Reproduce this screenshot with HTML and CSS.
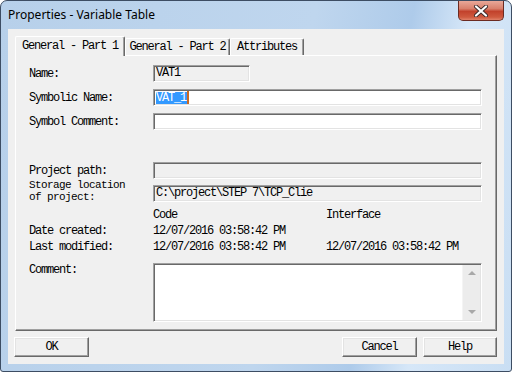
FILE: index.html
```html
<!DOCTYPE html>
<html lang="en">
<head>
    <meta charset="UTF-8">
    <title>Properties - Variable Table</title>
    <link rel="stylesheet" href="styles.css">
</head>
<body>
<div class="window">
    <div class="titlebar">
        <span class="title">Properties - Variable Table</span>
        <div class="close-btn">
            <svg width="16" height="12" viewBox="0 0 16 12">
                <path d="M3 1.5 L13 10.5 M13 1.5 L3 10.5" stroke="#3a2a2a" stroke-width="4" stroke-linecap="round"/>
                <path d="M3 1.5 L13 10.5 M13 1.5 L3 10.5" stroke="#ffffff" stroke-width="2.2" stroke-linecap="round"/>
            </svg>
        </div>
    </div>

    <div class="client">
        <div class="tabs">
            <div class="tab active">General - Part 1</div>
            <div class="tab tab-part2">General - Part 2</div>
            <div class="tab tab-attr">Attributes</div>
        </div>

        <div class="pane">
            <div class="row">
                <label>Name:</label>
                <div class="field readonly field-short">VAT1</div>
            </div>
            <div class="row gap-7">
                <label>Symbolic Name:</label>
                <div class="field"><span class="selected">VAT_1</span><span class="caret"></span></div>
            </div>
            <div class="row gap-7">
                <label>Symbol Comment:</label>
                <div class="field"></div>
            </div>
            <div class="row gap-32">
                <label>Project path:</label>
                <div class="field readonly"></div>
            </div>
            <div class="row row-top gap-6">
                <label class="label-two-lines">Storage location<br>of project:</label>
                <div class="field readonly">C:\project\STEP 7\TCP_Clie</div>
            </div>

            <div class="info-row info-head">
                <span></span>
                <span>Code</span>
                <span>Interface</span>
            </div>
            <div class="info-row">
                <span>Date created:</span>
                <span>12/07/2016 03:58:42 PM</span>
                <span></span>
            </div>
            <div class="info-row">
                <span>Last modified:</span>
                <span>12/07/2016 03:58:42 PM</span>
                <span>12/07/2016 03:58:42 PM</span>
            </div>

            <div class="row row-top comment-row">
                <label class="comment-label">Comment:</label>
                <div class="field memo">
                    <div class="memo-text"></div>
                    <div class="scrollbar">
                        <div class="arrow arrow-up"></div>
                        <div class="arrow arrow-down"></div>
                    </div>
                </div>
            </div>
        </div>

        <div class="buttons">
            <div class="btn">OK</div>
            <div class="btn-spacer"></div>
            <div class="btn">Cancel</div>
            <div class="btn">Help</div>
        </div>
    </div>
</div>
</body>
</html>
```

FILE: styles.css
```css
body {
    margin: 0;
    padding: 0;
    background-color: #ffffff;
}

.window {
    width: 512px;
    height: 372px;
    box-sizing: border-box;
    border: 1px solid #3d4d63;
    border-radius: 7px 7px 3px 3px;
    padding: 0 7px 7px 7px;
    background: linear-gradient(100deg, #b7d0ea 0%, #bfd6ee 55%, #aecbea 72%, #d6e7f8 82%, #c9def3 100%);
}

.titlebar {
    height: 28px;
    display: flex;
    align-items: flex-start;
}

.title {
    font-family: "Noto Sans", "Open Sans", sans-serif;
    font-size: 12px;
    line-height: 28px;
    color: #000;
}

.close-btn {
    margin-left: auto;
    width: 46px;
    height: 20px;
    box-sizing: border-box;
    border: 1px solid #6b2b22;
    border-top: none;
    border-radius: 0 0 5px 5px;
    background: linear-gradient(#e9a899 0%, #d9806c 40%, #c2422c 55%, #cf5a3f 85%, #e0826a 100%);
    display: flex;
    align-items: center;
    justify-content: center;
}

.client {
    height: 335px;
    box-sizing: border-box;
    background-color: #f0f0f0;
    padding: 7px 7px 7px 7px;
    font-family: "Liberation Mono", monospace;
    font-size: 12px;
    letter-spacing: -1.2px;
    color: #000;
}

/* tab strip */
.tabs {
    display: flex;
    align-items: flex-end;
    height: 19px;
}

.tab {
    height: 17px;
    box-sizing: border-box;
    border: 1px solid #ffffff;
    border-bottom: none;
    border-right-color: #696969;
    border-radius: 2px 2px 0 0;
    box-shadow: inset -1px 0 #a0a0a0;
    background-color: #f0f0f0;
    text-align: center;
    line-height: 14px;
    padding-top: 1px;
}

.tab.active {
    width: 110px;
    height: 20px;
    margin-bottom: -1px;
    padding-top: 2px;
    position: relative;
    z-index: 1;
}

.tab-part2 {
    width: 105px;
}

.tab-attr {
    width: 74px;
}

/* tab page */
.pane {
    height: 276px;
    box-sizing: border-box;
    border: 1px solid;
    border-color: #ffffff #696969 #696969 #ffffff;
    box-shadow: inset -1px -1px #a0a0a0;
    padding: 9px 14px 0 13px;
}

.row {
    display: grid;
    grid-template-columns: 124px 1fr;
    align-items: center;
}

.row-top {
    align-items: start;
}

.gap-6 {
    margin-top: 6px;
}

.gap-7 {
    margin-top: 7px;
}

.gap-32 {
    margin-top: 32px;
}

label {
    line-height: 12px;
}

.label-two-lines {
    margin-top: -6px;
    font-size: 11px;
    letter-spacing: -0.6px;
}

.field {
    height: 17px;
    box-sizing: border-box;
    border: 1px solid;
    border-color: #a0a0a0 #ffffff #ffffff #a0a0a0;
    box-shadow: inset 1px 1px #696969, inset -1px -1px #e3e3e3;
    background-color: #ffffff;
    padding: 0 2px;
    line-height: 15px;
    white-space: nowrap;
    overflow: hidden;
    display: flex;
    align-items: center;
}

.field.readonly {
    background-color: #f0f0f0;
}

.field-short {
    width: 97px;
}

.selected {
    background-color: #3399ff;
    color: #ffffff;
    line-height: 12px;
    padding-right: 1px;
}

.caret {
    width: 2px;
    height: 13px;
    background-color: #cc6a22;
}

.info-row {
    display: grid;
    grid-template-columns: 124px 173px 1fr;
    height: 16px;
    line-height: 16px;
}

.info-head {
    margin-top: 4px;
}

.comment-row {
    margin-top: 8px;
}

.comment-label {
    margin-top: 1px;
}

.field.memo {
    height: 59px;
    padding: 1px 1px 1px 0;
    align-items: stretch;
}

.memo-text {
    flex: 1;
}

.scrollbar {
    width: 17px;
    background-color: #ececec;
    border-left: 1px solid #f4f4f4;
    display: flex;
    flex-direction: column;
    justify-content: space-between;
    align-items: center;
    padding: 6px 0;
}

.arrow {
    width: 0;
    height: 0;
    border-left: 4px solid transparent;
    border-right: 4px solid transparent;
}

.arrow-up {
    border-bottom: 4px solid #a8a8a8;
}

.arrow-down {
    border-top: 4px solid #a8a8a8;
}

/* dialog buttons */
.buttons {
    display: flex;
    gap: 6px;
    margin-top: 6px;
    margin-left: -1px;
}

.btn-spacer {
    flex: 1;
}

.btn {
    width: 75px;
    height: 20px;
    box-sizing: border-box;
    border: 1px solid;
    border-color: #ffffff #696969 #696969 #ffffff;
    box-shadow: inset -1px -1px #a0a0a0, inset 1px 1px #e3e3e3;
    background-color: #f0f0f0;
    text-align: center;
    line-height: 18px;
}

.btn:last-child {
    width: 74px;
}
```
